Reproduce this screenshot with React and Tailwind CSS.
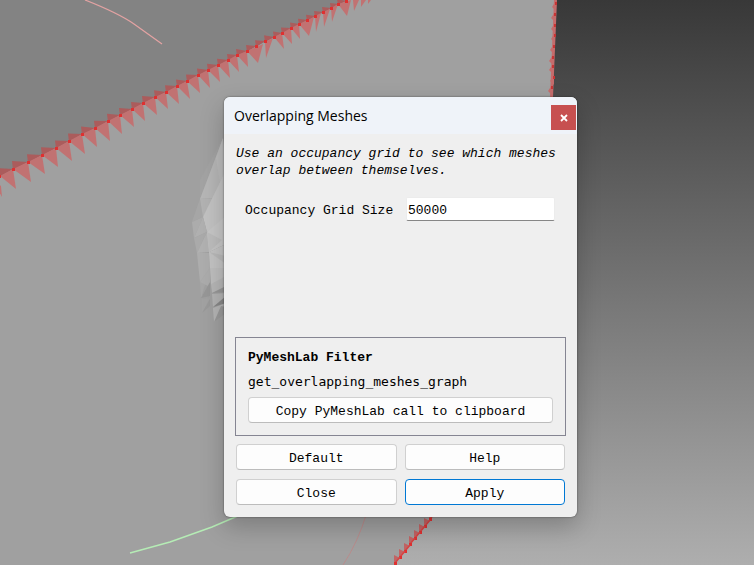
import { useState } from 'react';

// Points where the selected boundary edges meet
const EDGE_DOTS = [
  [-1, 176], [13, 169], [28, 162], [42, 155], [56, 148], [69, 141], [82, 134], [95, 128],
  [108, 121], [120, 115], [132, 109], [143, 103], [155, 97], [166, 92], [177, 86], [187, 81],
  [198, 75], [208, 70], [218, 65], [228, 60], [237, 55], [247, 51], [256, 46], [265, 41],
  [274, 37], [282, 33], [291, 28], [299, 24], [307, 20], [315, 16], [323, 12], [331, 8],
  [338, 4], [346, 1],
];

// Faces hanging below the edge: start, end, tip
const LOWER_FACES = [
  [-8, 180, 1, 186, 2, 197], [0, 176, 13, 169, 16, 189], [13, 169, 28, 162, 31, 182],
  [28, 162, 42, 155, 45, 174], [42, 155, 56, 148, 58, 167], [56, 148, 69, 141, 72, 161],
  [69, 141, 82, 134, 85, 154], [82, 134, 95, 128, 97, 147], [95, 128, 108, 121, 110, 141],
  [108, 121, 120, 115, 122, 134], [120, 115, 132, 109, 134, 127], [132, 109, 143, 103, 145, 121],
  [143, 103, 155, 97, 157, 115], [155, 97, 166, 92, 168, 109], [166, 92, 177, 86, 179, 104],
  [177, 86, 187, 81, 190, 99], [187, 81, 198, 75, 200, 93], [198, 75, 208, 70, 210, 88],
  [208, 70, 218, 65, 220, 82], [218, 65, 228, 60, 230, 78], [228, 60, 237, 55, 239, 72],
  [237, 55, 247, 51, 248, 67], [247, 51, 263, 44, 258, 63], [265, 42, 273, 38, 266, 58],
  [274, 37, 282, 33, 284, 49], [282, 33, 291, 28, 292, 44], [291, 28, 299, 24, 300, 39],
  [299, 24, 314, 17, 309, 36], [315, 16, 321, 13, 316, 32], [323, 12, 330, 9, 324, 27],
  [331, 8, 338, 4, 332, 22], [338, 4, 351, 0, 347, 16], [353, 0, 359, 0, 354, 11],
  [361, 0, 366, 0, 361, 7], [368, 0, 371, 0, 368, 4],
];

const SIDE_DOTS = [
  [556, 3], [555, 14], [555, 25], [555, 35], [554, 46], [553, 57], [553, 66], [554, 77], [552, 87],
];

const LOWER_DOTS = [
  [430, 519], [425, 526], [420, 532], [415, 538], [410, 544], [405, 551], [400, 557], [395, 563],
];

// Shaded faces of the mesh behind the dialog
const MESH_FACES = [
  ['M223 138L200 180L200 199Z', '#a3a3a3'],
  ['M200 199L203 217L192 222Z', '#a6a6a6'],
  ['M223 138L200 199L216 198L226 173Z', '#b6b6b6'],
  ['M216 158L223 138L226 173L220 183Z', '#bbbbbb'],
  ['M200 199L216 198L203 217Z', '#b2b2b2'],
  ['M226 170L203 217L207 232L226 220Z', '#c2c2c2'],
  ['M192 222L203 217L194 238Z', '#acacac'],
  ['M203 217L207 232L194 238Z', '#b0b0b0'],
  ['M194 238L207 232L197 253Z', '#aaaaaa'],
  ['M207 232L209 252L197 253Z', '#b1b1b1'],
  ['M207 232L226 216V244L209 252Z', '#c6c6c6'],
  ['M207 232L222 240L209 252Z', '#bdbdbd'],
  ['M197 253H209L210 270L200 282Z', '#adadad'],
  ['M209 252L226 244V268H210Z', '#c3c3c3'],
  ['M209 252L226 256V264Z', '#b9b9b9'],
  ['M210 268H226V284L211 284Z', '#bebebe'],
  ['M210 268L200 282L201 298Z', '#a6a6a6'],
  ['M210 268V287L200 282Z', '#acacac'],
  ['M210 282L201 298L210 296Z', '#979797'],
  ['M210 298L202 299V313Z', '#a2a2a2'],
  ['M202 313L210 299V306Z', '#999999'],
  ['M211 284L226 276V288L212 293Z', '#b6b6b6'],
  ['M212 293L226 286V292Z', '#979797'],
  ['M212 294L226 293V298L213 307Z', '#b3b3b3'],
  ['M213 307L226 296V303Z', '#888888'],
  ['M213 308L226 303L214 322Z', '#b5b5b5'],
  ['M214 322L221 306L226 307V313Z', '#999999'],
];

function Viewport() {
  return (
    <svg
      aria-hidden="true"
      className="absolute inset-0 h-full w-full"
      viewBox="0 0 754 565"
      preserveAspectRatio="xMidYMid slice"
    >
      <defs>
        <linearGradient id="backdrop" x1="0" y1="0" x2="0" y2="1">
          <stop offset="0" stopColor="#383838" />
          <stop offset="1" stopColor="#aeaeae" />
        </linearGradient>
      </defs>
      <rect width="754" height="565" fill="url(#backdrop)" />
      <path d="M0 0H556L552 97L540 330L432 517L394 565H0Z" fill="#a0a0a0" />
      <path d="M0 0H348L0 176Z" fill="#838383" />

      {/* boundary edge */}
      {EDGE_DOTS.slice(0, -1).map(([x, y], i) => {
        const [nx, ny] = EDGE_DOTS[i + 1];
        const h = 8 - i * 0.1;
        return <path key={x} d={`M${x} ${y + 1}L${x - 1} ${y - h}L${nx} ${ny}Z`} fill="#ab5c5c" />;
      })}
      {LOWER_FACES.map(([ax, ay, bx, by, tx, ty]) => (
        <path key={`${ax}-${tx}`} d={`M${ax} ${ay}L${bx} ${by}L${tx} ${ty}Z`} fill="#c17272" />
      ))}
      {EDGE_DOTS.map(([x, y]) => (
        <rect key={x} x={x - 1} y={y - 1} width="3" height="3" fill="#df3030" />
      ))}

      {/* right hand edge */}
      <path d="M554 0H557L553 97H550Z" fill="#c56c6c" />
      {SIDE_DOTS.map(([x, y]) => (
        <g key={y}>
          <path d={`M${x} ${y - 2}L${x - 4} ${y + 4}L${x} ${y + 8}Z`} fill="#c56c6c" />
          <rect x={x - 1} y={y - 1} width="2" height="3" fill="#c83535" />
        </g>
      ))}

      {/* bottom edge */}
      {LOWER_DOTS.map(([x, y]) => (
        <g key={y}>
          <path d={`M${x - 1} ${y - 8}V${y + 1}L${x + 5} ${y - 5}Z`} fill="#c26464" />
          <path d={`M${x + 5} ${y - 6}L${x} ${y}`} stroke="#d64444" strokeWidth="1.5" />
          <rect x={x - 1} y={y - 1} width="3" height="3" fill="#df3030" />
        </g>
      ))}

      {MESH_FACES.map(([d, fill]) => (
        <path key={d} d={d} fill={fill} />
      ))}

      {/* trackball arcs */}
      <path d="M85 0Q118 13 134 24L162 44" fill="none" stroke="#e2a2a2" strokeWidth="1.3" />
      <path d="M130 553L170 542L212 527L240 515" fill="none" stroke="#b5ecb5" strokeWidth="1.4" />
      <path d="M366 515Q358 542 343 565" fill="none" stroke="#b88c8c" />
    </svg>
  );
}

function DialogButton({ children, primary = false, onClick }) {
  return (
    <button
      type="button"
      onClick={onClick}
      className={`h-[26px] w-full rounded border bg-[#fdfdfd] pt-0.5 text-center hover:bg-[#e0eef9] ${
        primary ? 'border-[#0078d4]' : 'border-[#d0d0d0] border-b-[#bcbcbc]'
      }`}
    >
      {children}
    </button>
  );
}

export default function App() {
  const [gridSize, setGridSize] = useState('50000');

  const copyCall = () => navigator.clipboard?.writeText('get_overlapping_meshes_graph');

  return (
    <main className="relative min-h-screen overflow-hidden bg-[#a0a0a0]">
      <Viewport />

      <section
        role="dialog"
        aria-labelledby="dialog-title"
        className="absolute left-56 top-[97px] flex min-h-[420px] w-[353px] flex-col overflow-hidden rounded-md bg-[#efefef] font-['Liberation_Mono',monospace] text-[13px] leading-[17px] text-black shadow-[0_0_2px_#00000088,0_10px_24px_#00000038]"
      >
        <header className="flex h-[37px] items-center justify-between bg-[#eff3f9] pl-[10px]">
          <h1 id="dialog-title" className="font-['Open_Sans',sans-serif] text-[14px]">
            Overlapping Meshes
          </h1>
          <button
            type="button"
            aria-label="Close window"
            className="mt-1 mr-px flex size-[25px] items-center justify-center bg-[#c75050] text-white"
          >
            <svg width="8" height="8" viewBox="0 0 8 8" aria-hidden="true">
              <path d="M1 1L7 7M7 1L1 7" stroke="currentColor" strokeWidth="1.8" />
            </svg>
          </button>
        </header>

        <div className="flex grow flex-col px-3 pt-[11px] pb-3">
          <p className="italic">Use an occupancy grid to see which meshes overlap between themselves.</p>

          <div className="mt-[18px] flex items-center justify-between pr-[10px] pl-[9px]">
            <label htmlFor="grid-size" className="pt-0.5">Occupancy Grid Size</label>
            <input
              id="grid-size"
              value={gridSize}
              onChange={(e) => setGridSize(e.target.value)}
              className="h-6 w-[149px] rounded-xs border border-[#ececec] border-b-[#868686] bg-white px-px pt-0.5 outline-none"
            />
          </div>

          {/* PyMeshLab call */}
          <div className="mt-auto -mx-px border border-[#858592] px-3 pt-[11px] pb-3">
            <h2 className="font-bold">PyMeshLab Filter</h2>
            <p className="my-[7px] font-['DejaVu_Sans_Mono',monospace]">get_overlapping_meshes_graph</p>
            <DialogButton onClick={copyCall}>Copy PyMeshLab call to clipboard</DialogButton>
          </div>

          <div className="mt-2 grid grid-cols-2 gap-x-2 gap-y-[9px]">
            <DialogButton onClick={() => setGridSize('50000')}>Default</DialogButton>
            <DialogButton>Help</DialogButton>
            <DialogButton>Close</DialogButton>
            <DialogButton primary>Apply</DialogButton>
          </div>
        </div>
      </section>
    </main>
  );
}
